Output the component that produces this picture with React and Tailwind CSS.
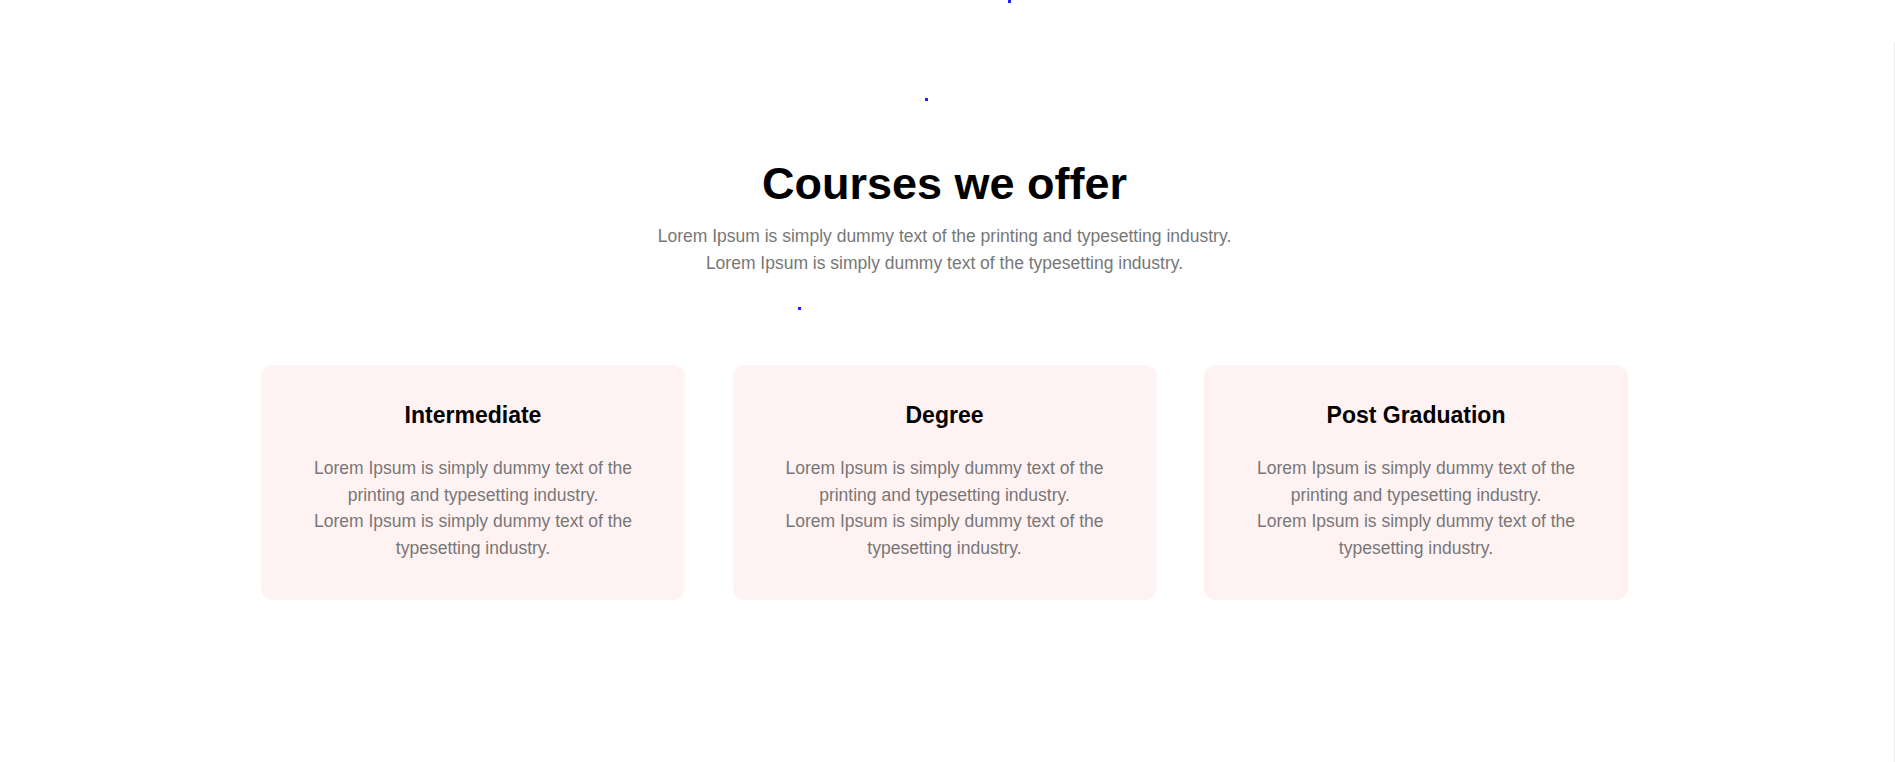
import React from 'react';

const courses = [
    { title: 'Intermediate' },
    { title: 'Degree' },
    { title: 'Post Graduation' },
];

const CourseCard = ({ title }) => (
    <div className="bg-[#fff2f2] rounded-[12px] px-[50px] pt-[37px] pb-[39px] text-center">
        <h3 className="text-[23px] leading-[26.5px] font-bold text-black">{title}</h3>
        <p className="mt-[26.5px] text-[17.5px] leading-[26.5px] text-[#777777]">
            Lorem Ipsum is simply dummy text of the printing and typesetting industry.
            <br />
            Lorem Ipsum is simply dummy text of the typesetting industry.
        </p>
    </div>
);

const App = () => {
    return (
        <div
            className="relative min-h-[762px] bg-white overflow-hidden"
            style={{ fontFamily: '"Liberation Sans", Arial, sans-serif' }}
        >
            {/* stray dots */}
            <span className="absolute left-[1008px] top-0 w-[3px] h-[3px] bg-[#2020ff]" />
            <span className="absolute left-[925px] top-[98px] w-[3px] h-[3px] bg-[#2020ff]" />
            <span className="absolute left-[798px] top-[307px] w-[3px] h-[3px] bg-[#2020ff]" />
            <div className="absolute right-0 top-[42px] bottom-0 w-px bg-[#ececec]" />

            <section className="pt-[158px] pr-[6px] flex flex-col items-center">
                <h2 className="text-[45px] leading-[52px] font-bold text-black">Courses we offer</h2>
                <p className="mt-[13px] text-[17.5px] leading-[27px] text-[#777777] text-center">
                    Lorem Ipsum is simply dummy text of the printing and typesetting industry.
                    <br />
                    Lorem Ipsum is simply dummy text of the typesetting industry.
                </p>

                <div className="mt-[88px] grid grid-cols-3 gap-x-[47.5px] w-[1367px]">
                    {courses.map((c) => (
                        <CourseCard key={c.title} title={c.title} />
                    ))}
                </div>
            </section>
        </div>
    );
};

export default App;
